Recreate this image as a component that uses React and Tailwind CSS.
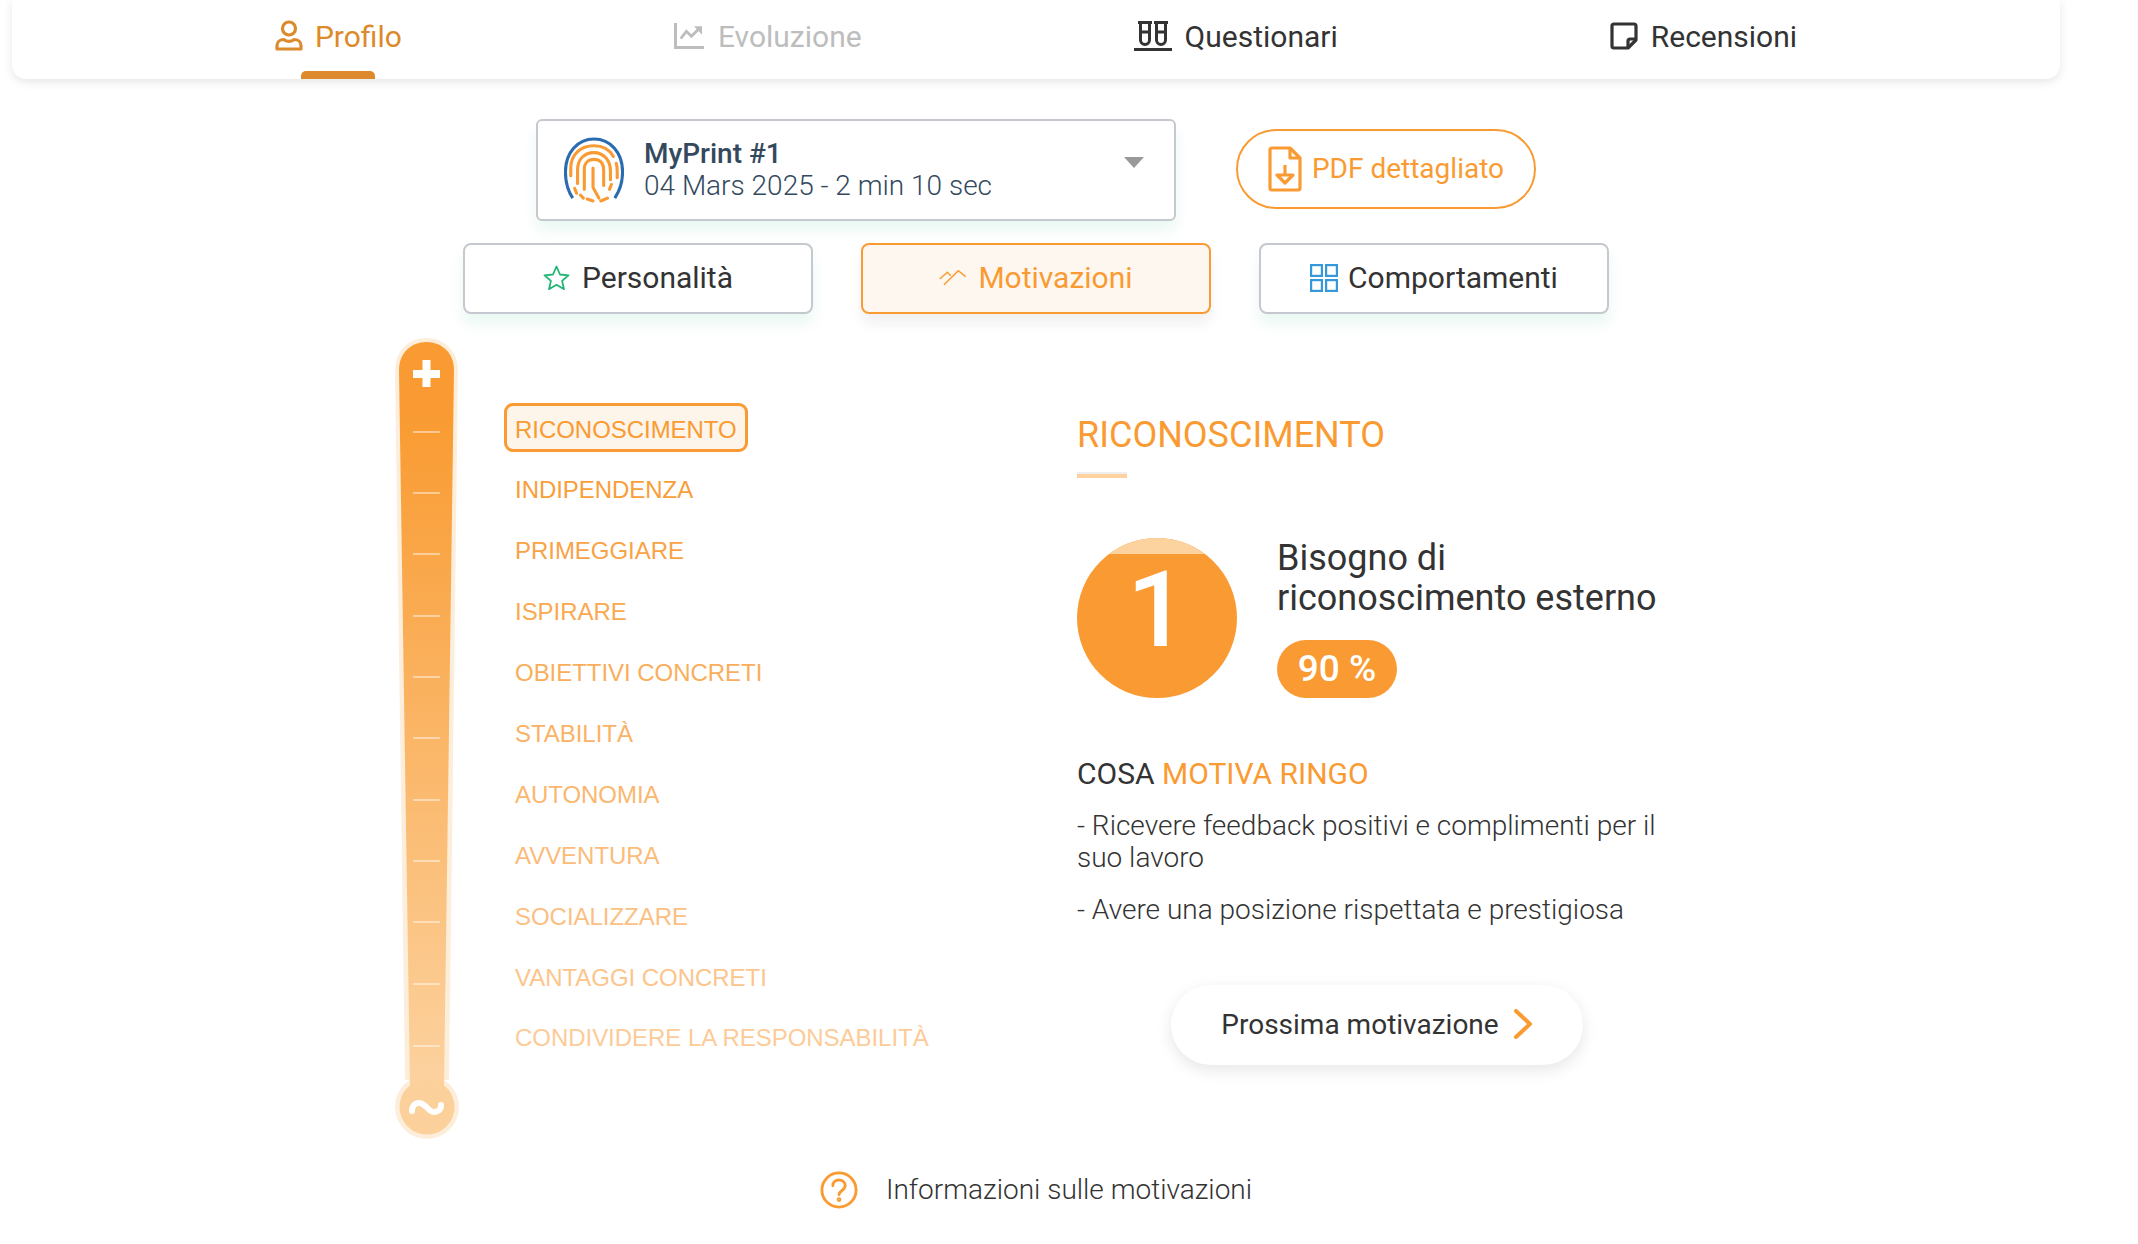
import React from "react";

const F = { fontFamily: "Roboto, sans-serif" };

function UserIcon() {
  return (
    <svg width="28" height="32" viewBox="0 0 28 32" fill="none" stroke="#dd8a2c" strokeWidth="3.2" className="shrink-0">
      <circle cx="14" cy="8.5" r="6.5" />
      <path d="M2 29v-3.500c0-3.500 3-6 7-6 2 2.500 8 2.500 10 0 4 0 7 2.500 7 6v3.500z" strokeLinejoin="round" />
    </svg>
  );
}
function ChartIcon() {
  return (
    <svg width="30" height="26" viewBox="0 0 30 26" fill="none" stroke="#bdbdbd" className="ml-[1px] shrink-0">
      <path d="M1.500 0v24.500H30" strokeWidth="3" />
      <path d="M6.700 15.700l5.700-7.400 5 5 8.300-8.300" strokeWidth="2.800" />
      <path d="M20 3.300h8v8.400z" fill="#bdbdbd" stroke="none" />
    </svg>
  );
}
function TubesIcon() {
  return (
    <svg width="38" height="30" viewBox="0 0 38 30" fill="none" stroke="#333" strokeWidth="3" className="shrink-0">
      <path d="M4 1.500h14M6.500 1.500V19a4.500 4.500 0 0 0 9 0V1.500M6.500 11h9" />
      <path d="M20 1.500h14M22.500 1.500V19a4.500 4.500 0 0 0 9 0V1.500M22.500 11h9" />
      <path d="M0 28.500h38" />
    </svg>
  );
}
function NoteIcon() {
  return (
    <svg width="28" height="28" viewBox="0 0 28 28" fill="none" stroke="#333" strokeWidth="3.2" strokeLinejoin="round" className="shrink-0">
      <path d="M4 2h20a2 2 0 0 1 2 2v14l-8 8H4a2 2 0 0 1-2-2V4a2 2 0 0 1 2-2z" />
      <path d="M26 17h-6a2 2 0 0 0-2 2v7" />
    </svg>
  );
}
function Fingerprint() {
  return (
    <svg width="60" height="66" viewBox="0 0 62 68" fill="none" strokeLinecap="round" className="shrink-0">
      <path d="M9 63C3 54 1.500 46 1.500 36 1.500 16 14 2 31 2s29.500 14 29.500 34c0 10-2 18-8 27" stroke="#2b6cb0" strokeWidth="3.200" strokeLinecap="butt" />
      <g stroke="#f99b32" strokeWidth="3.200">
        <path d="M7 40V32C7 18 17 9 31 9c9 0 16 4 20 11" />
        <path d="M54 27c1 3 1 6 1 9v6" />
        <path d="M14 48V34c0-11 7-18 17-18s17 8 17 19v9" />
        <path d="M21 54V33c0-6 4-10 10-10s10 4 10 11v16" />
        <path d="M30 32v20l6 11" />
        <path d="M11 53l2 5" />
        <path d="M17 60l3 3" />
        <path d="M24 64l6 2" />
        <path d="M38 66l7-3" />
        <path d="M47 54l2-5" />
      </g>
    </svg>
  );
}
function PdfIcon() {
  return (
    <svg width="34" height="46" viewBox="0 0 34 46" fill="none" stroke="#f99b32" strokeWidth="3.200" strokeLinejoin="round" className="shrink-0">
      <path d="M4 2h18l10 10v30a2 2 0 0 1-2 2H4a2 2 0 0 1-2-2V4a2 2 0 0 1 2-2z" />
      <path d="M22 2v10h10" />
      <path d="M17 19v10" />
      <path d="M9 29h16l-8 8z" />
    </svg>
  );
}
function StarIcon() {
  return (
    <svg width="27" height="25" viewBox="0 0 27 25" fill="none" stroke="#22b573" strokeWidth="1.800" strokeLinejoin="round" className="shrink-0">
      <path d="M13.500 1.500l3.500 8 8.500.8-6.400 5.600 1.900 8.300-7.500-4.400-7.500 4.400 1.900-8.300L1.500 10.300l8.500-.8z" />
    </svg>
  );
}
function MotivIcon() {
  return (
    <svg width="28" height="17" viewBox="0 0 28 17" fill="none" stroke="#f99b32" strokeWidth="1.500" className="shrink-0">
      <path d="M.7 10l7.600-6.700 3.400 3.400" />
      <path d="M5 15.700L19.300 1.700l7.400 6" />
    </svg>
  );
}
function GridIcon() {
  return (
    <svg width="28" height="28" viewBox="0 0 28 28" fill="none" stroke="#3498db" strokeWidth="2.200" className="shrink-0">
      <rect x="1.100" y="1.100" width="10.800" height="10.800" />
      <rect x="16.100" y="1.100" width="10.800" height="10.800" />
      <rect x="1.100" y="16.100" width="10.800" height="10.800" />
      <rect x="16.100" y="16.100" width="10.800" height="10.800" />
    </svg>
  );
}

function Thermometer() {
  const ticks = [96, 157, 218, 280, 341, 402, 464, 525, 586, 648, 710];
  return (
    <svg width="64" height="808" viewBox="0 0 64 808" className="shrink-0">
      <defs>
        <linearGradient id="tube" x1="0" y1="0" x2="0" y2="1">
          <stop offset="0.1" stopColor="#f99b32" />
          <stop offset="1" stopColor="#fcd29f" />
        </linearGradient>
      </defs>
      <path d="M0 35C0 16 14 3 31.500 3S63 16 63 35L54 745H10z" fill="#fdeedb" />
      <circle cx="32" cy="772" r="32" fill="#fdeedb" />
      <path d="M4 35C4 18 16 7 31.500 7S59 18 59 35L49 752H15z" fill="url(#tube)" />
      <circle cx="32" cy="772" r="27.500" fill="#fcd09a" />
      <rect x="18" y="35" width="27" height="8" fill="#fff" />
      <rect x="27.500" y="25" width="8" height="27" fill="#fff" />
      {ticks.map((y) => (
        <rect key={y} x="18" y={y} width="27" height="2" fill="#fff" fillOpacity="0.45" />
      ))}
      <path d="M17 776c0-5 3-8 7-8 7 0 9 9 15 9 4 0 7-2 7-7" fill="none" stroke="#fff" strokeWidth="6" strokeLinecap="round" />
    </svg>
  );
}

const items = [
  ["RICONOSCIMENTO", "#f99b32"],
  ["INDIPENDENZA", "#f99e39"],
  ["PRIMEGGIARE", "#f9a346"],
  ["ISPIRARE", "#faa950"],
  ["OBIETTIVI CONCRETI", "#faae5b"],
  ["STABILITÀ", "#fab266"],
  ["AUTONOMIA", "#fbb76f"],
  ["AVVENTURA", "#fbbc79"],
  ["SOCIALIZZARE", "#fbc083"],
  ["VANTAGGI CONCRETI", "#fcc58c"],
  ["CONDIVIDERE LA RESPONSABILITÀ", "#fccb98"],
];

export default function App() {
  return (
    <div className="w-[2138px] h-[1244px] overflow-hidden bg-white text-[#333]" style={F}>
      <div className="w-[2072px]">
        <nav className="ml-[12px] w-[2048px] h-[79px] bg-white rounded-b-[14px] shadow-[0_3px_10px_rgba(0,0,0,0.10)] flex justify-center gap-[272px] text-[30px]">
          <div className="relative h-full w-[126px] flex items-center gap-[12px] pb-[7px] text-[#dd8a2c]">
            <UserIcon />
            <span>Profilo</span>
            <div className="absolute left-[26px] bottom-0 w-[74px] h-[8px] bg-[#dd8a2c] rounded-t-[5px]" />
          </div>
          <div className="h-full flex items-center gap-[14px] pb-[7px] text-[#bdbdbd]">
            <ChartIcon />
            <span>Evoluzione</span>
          </div>
          <div className="h-full flex items-center gap-[13px] pb-[7px]">
            <TubesIcon />
            <span>Questionari</span>
          </div>
          <div className="h-full flex items-center gap-[13px] pb-[7px]">
            <NoteIcon />
            <span>Recensioni</span>
          </div>
        </nav>

        <div className="mt-[40px] h-[102px] flex justify-center items-start gap-[60px]">
          <div className="relative w-[640px] h-[102px] bg-white border-2 border-[#c5c8ce] rounded-[6px] shadow-[0_10px_14px_rgba(46,190,130,0.10)] flex items-center pl-[26px] gap-[20px] text-[#34495e]">
            <Fingerprint />
            <div className="text-[28px] leading-[32px]">
              <div className="font-medium">MyPrint #1</div>
              <div className="font-light">04 Mars 2025 - 2 min 10 sec</div>
            </div>
            <div className="absolute right-[30px] top-[36px] w-0 h-0 border-l-[10px] border-r-[10px] border-t-[11px] border-l-transparent border-r-transparent border-t-[#999]" />
          </div>
          <div className="mt-[10px] w-[300px] h-[80px] border-2 border-[#f99b32] rounded-full flex items-center justify-center gap-[10px] text-[#f99b32] text-[28px]">
            <PdfIcon />
            <span>PDF dettagliato</span>
          </div>
        </div>

        <div className="mt-[22px] flex justify-center gap-[48px] text-[30px]">
          <div className="w-[350px] h-[71px] pb-[2px] bg-white border-2 border-[#c5c8ce] rounded-[8px] shadow-[0_10px_14px_rgba(46,190,130,0.10)] flex items-center justify-center gap-[12px]">
            <StarIcon />
            <span>Personalità</span>
          </div>
          <div className="w-[350px] h-[71px] pb-[2px] bg-[#fef7f0] border-2 border-[#f99b32] rounded-[8px] shadow-[0_10px_14px_rgba(0,0,0,0.06)] flex items-center justify-center gap-[11px] text-[#f99b32]">
            <MotivIcon />
            <span>Motivazioni</span>
          </div>
          <div className="w-[350px] h-[71px] pb-[2px] bg-white border-2 border-[#c5c8ce] rounded-[8px] shadow-[0_10px_14px_rgba(46,190,130,0.10)] flex items-center justify-center gap-[10px]">
            <GridIcon />
            <span>Comportamenti</span>
          </div>
        </div>

        <div className="mt-[21px] pl-[395px] flex items-start">
          <Thermometer />
          <div className="ml-[45px] w-[573px] pt-[68px] flex flex-col items-start gap-[11.9px] tracking-[-0.04px]" style={{ fontFamily: '"Liberation Sans", Arial, sans-serif' }}>
            {items.map(([t, c], i) => (
              <div
                key={t}
                className={`h-[49px] flex items-center text-[24px] px-[8px] pt-[4px] border-[3px] rounded-[9px] ${i === 0 ? "border-[#f99b32] bg-[#fdf4ea]" : "border-transparent"}`}
                style={{ color: c }}
              >
                {t}
              </div>
            ))}
          </div>
          <div className="w-[520px] pt-[73px]">
            <div className="text-[36px] leading-[54px] text-[#f99b32]">RICONOSCIMENTO</div>
            <div className="mt-[10px] w-[50px] h-[6px] bg-[#fdd29f] border-t-2 border-[#eeeeee]" />
            <div className="mt-[60px] flex items-start gap-[40px]">
              <div className="relative shrink-0 w-[160px] h-[160px] rounded-full overflow-hidden bg-[#f99b32] flex items-center justify-center text-white text-[106px] font-medium leading-none">
                <div className="absolute left-0 top-0 w-full h-[16px] bg-[#fcd29f]" />
                <span className="-mt-[16px]">1</span>
              </div>
              <div className="whitespace-nowrap">
                <div className="text-[36px] leading-[40px]">Bisogno di<br />riconoscimento esterno</div>
                <div className="mt-[22px] w-[120px] h-[58px] rounded-full bg-[#f99b32] text-white text-[37px] font-medium flex items-center justify-center">90 %</div>
              </div>
            </div>
            <div className="mt-[58px] text-[30px] leading-[36px]">COSA <span className="text-[#f99b32]">MOTIVA RINGO</span></div>
            <div className="mt-[18px] text-[28px] leading-[32px] font-light w-[590px]">- Ricevere feedback positivi e complimenti per il suo lavoro</div>
            <div className="mt-[20px] text-[28px] leading-[32px] font-light whitespace-nowrap">- Avere una posizione rispettata e prestigiosa</div>
            <div className="mt-[59px] ml-[94px] w-[412px] h-[80px] bg-white rounded-full shadow-[0_5px_16px_rgba(0,0,0,0.10)] flex items-center justify-center gap-[14px] text-[28px]">
              <span>Prossima motivazione</span>
              <svg width="20" height="30" viewBox="0 0 20 30" fill="none" stroke="#f99b32" strokeWidth="4" strokeLinecap="round" strokeLinejoin="round" className="-mt-[3px]">
                <path d="M3 2l14 13L3 28" />
              </svg>
            </div>
          </div>
        </div>

        <div className="mt-[26px] flex items-center justify-center gap-[28px]">
          <svg width="38" height="38" viewBox="0 0 40 40" fill="none" stroke="#f99b32" strokeWidth="3" strokeLinecap="round">
            <circle cx="20" cy="20" r="18" />
            <path d="M13.500 15.500c0-4 3-6 6.500-6s6.500 2.500 6.500 6c0 5-6.500 5-6.500 9.500" />
            <circle cx="20" cy="30" r="1" />
          </svg>
          <span className="text-[28px] font-light">Informazioni sulle motivazioni</span>
        </div>
      </div>
    </div>
  );
}
